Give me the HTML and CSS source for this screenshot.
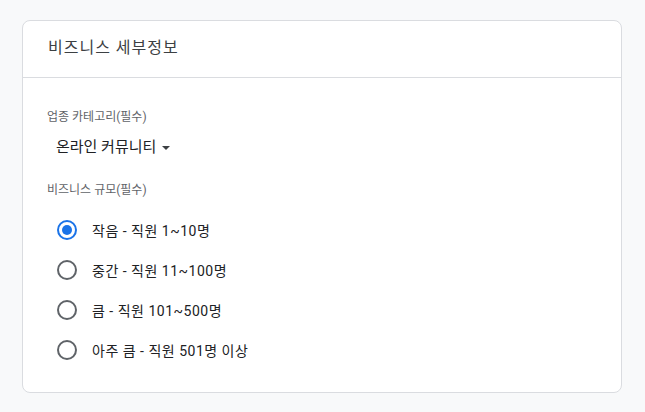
FILE: index.html
```html
<!DOCTYPE html>
<html lang="ko">
<head>
    <meta charset="UTF-8">
    <meta name="viewport" content="width=device-width, initial-scale=1.0">
    <title>비즈니스 세부정보</title>
    <link rel="stylesheet" href="styles.css">
</head>
<body>
    <div class="card">
        <div class="card-header">비즈니스 세부정보</div>
        <div class="card-body">
            <div class="field-label">업종 카테고리(필수)</div>
            <div class="select">
                <span>온라인 커뮤니티</span>
                <span class="caret"></span>
            </div>

            <div class="field-label second">비즈니스 규모(필수)</div>
            <div class="radio-list">
                <label class="radio-row">
                    <span class="radio checked"></span>
                    <span>작음 - 직원 1~10명</span>
                </label>
                <label class="radio-row">
                    <span class="radio"></span>
                    <span>중간 - 직원 11~100명</span>
                </label>
                <label class="radio-row">
                    <span class="radio"></span>
                    <span>큼 - 직원 101~500명</span>
                </label>
                <label class="radio-row">
                    <span class="radio"></span>
                    <span>아주 큼 - 직원 501명 이상</span>
                </label>
            </div>
        </div>
    </div>
</body>
</html>
```

FILE: styles.css
```css
body {
    margin: 0;
    padding: 20px 0 0 22px;
    background-color: #f8f9fa;
    font-family: Roboto, "Noto Sans CJK KR", sans-serif;
    color: #3c4043;
}
.card {
    width: 598px;
    background: #fff;
    border: 1px solid #dadce0;
    border-radius: 8px;
}
.card-header {
    height: 56px;
    line-height: 54px;
    padding: 0 25px;
    font-size: 16px;
    letter-spacing: 1px;
    color: #3c4043;
    border-bottom: 1px solid #dadce0;
}
.card-body {
    padding: 31px 24px 22px;
}
.field-label {
    font-size: 12px;
    line-height: 16px;
    color: #5f6368;
}
.field-label.second {
    margin-top: 25px;
}
.select {
    display: flex;
    align-items: center;
    gap: 6px;
    margin-top: 12px;
    padding-left: 9px;
    font-size: 15px;
    line-height: 20px;
    color: #202124;
}
.caret {
    width: 0;
    height: 0;
    border-left: 4px solid transparent;
    border-right: 4px solid transparent;
    border-top: 4px solid #3c4043;
    margin-top: 1px;
}
.radio-list {
    margin-top: 12px;
}
.radio-row {
    display: flex;
    align-items: center;
    height: 40px;
    padding-left: 10px;
    gap: 15px;
    font-size: 14px;
    letter-spacing: 0.5px;
    color: #202124;
}
.radio {
    box-sizing: border-box;
    width: 20px;
    height: 20px;
    border: 2px solid #5f6368;
    border-radius: 50%;
    display: flex;
    align-items: center;
    justify-content: center;
}
.radio.checked {
    border-color: #1a73e8;
}
.radio.checked::after {
    content: "";
    width: 10px;
    height: 10px;
    border-radius: 50%;
    background: #1a73e8;
}
```
